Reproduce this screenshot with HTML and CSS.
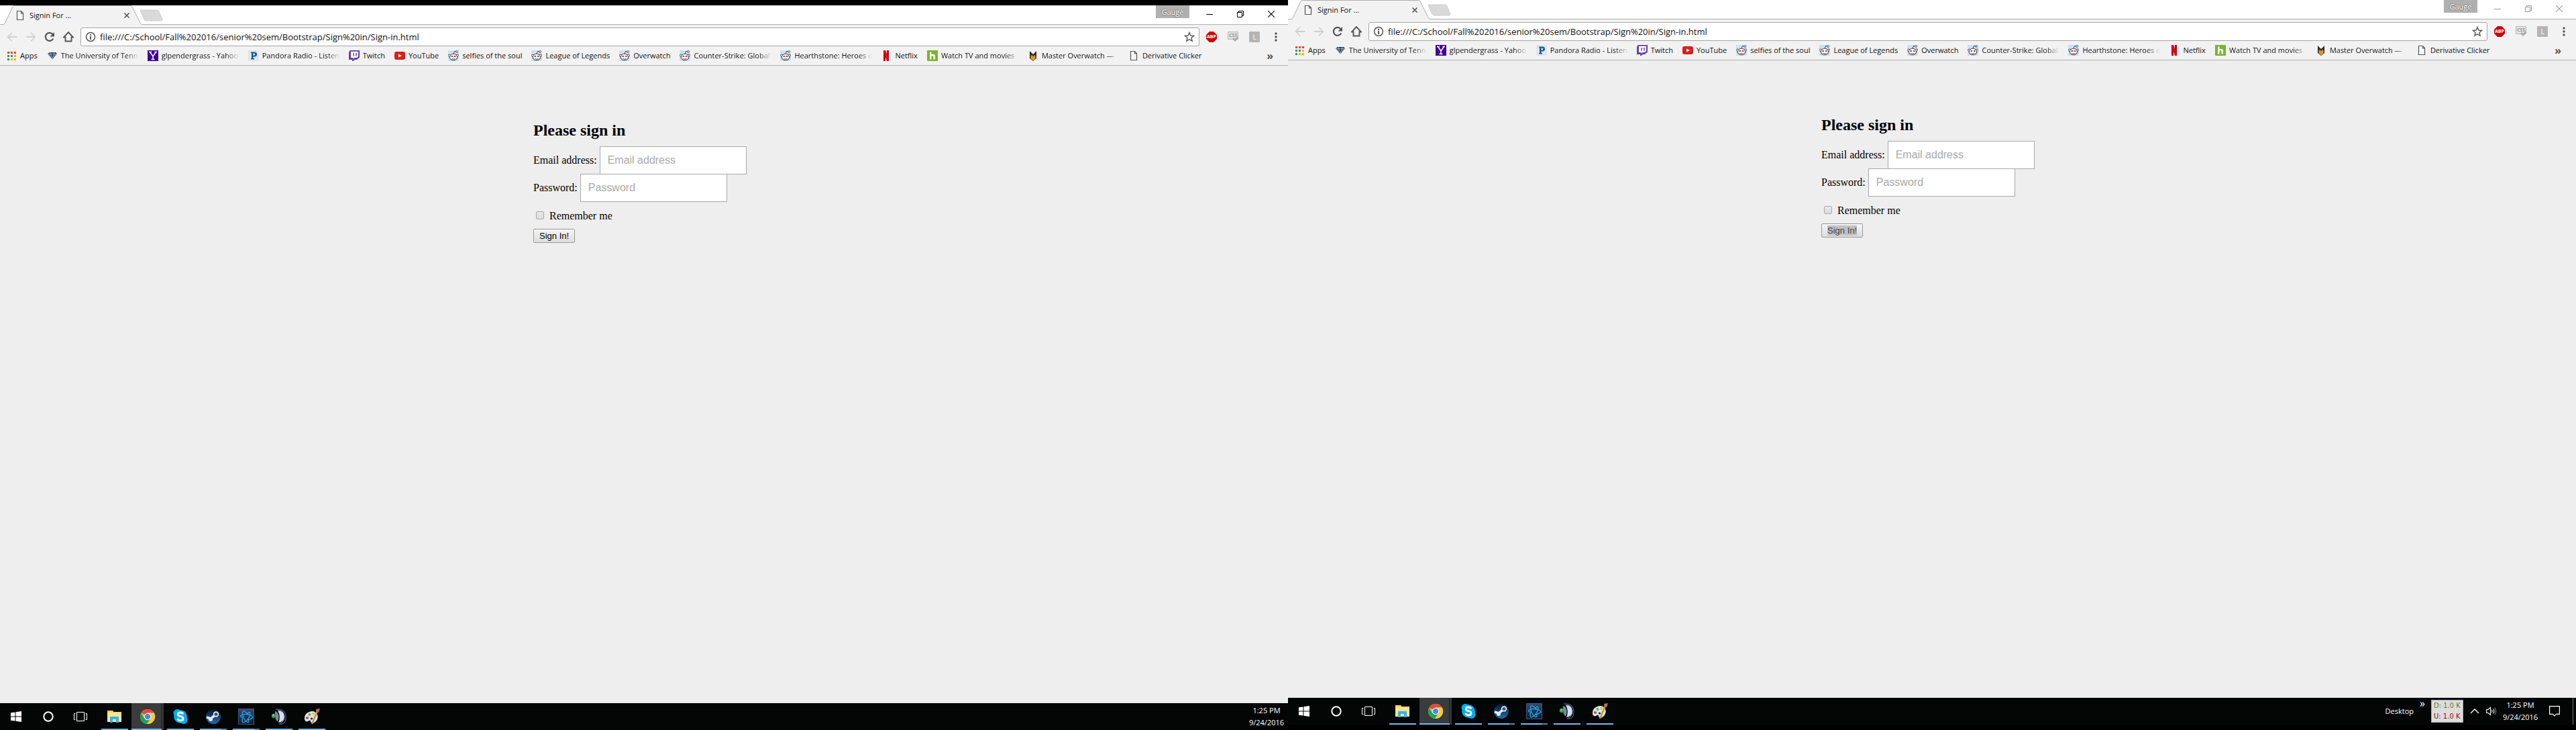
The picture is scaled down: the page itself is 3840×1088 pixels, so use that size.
FILE: index.html
```html
<!DOCTYPE html>
<html lang="en">
<head>
<meta charset="utf-8">
<title>Signin For ...</title>
<link rel="stylesheet" href="styles.css">
</head>
<body>
<svg class="sprite" aria-hidden="true">
  <defs>
    <linearGradient id="g-steam" x1="0" y1="0" x2="0" y2="1"><stop offset="0" stop-color="#0c1330"/><stop offset="1" stop-color="#1d6fb0"/></linearGradient>
    <linearGradient id="g-bnet" x1="0" y1="0" x2="0" y2="1"><stop offset="0" stop-color="#3a4a6e"/><stop offset="1" stop-color="#111a30"/></linearGradient>
  </defs>
  <symbol id="i-tab" viewBox="0 0 208 29"><path d="M0 28.5H1Q2.5 28.5 3.500 26L15 2Q16 .5 18 .5H190Q192 .5 193 2L205 26Q206 28.500 208 28.500V29H0z" fill="#f2f2f2"/><path d="M0 28.500H1Q2.500 28.500 3.500 26L15 2Q16 .5 18 .5H190Q192 .5 193 2L205 26Q206 28.500 208 28.500" fill="none" stroke="#b0b0b0"/></symbol>
  <symbol id="i-newtab" viewBox="0 0 36 18"><path d="M1 2Q1 1 2 1H26Q28 1 29 3L34 15Q34 17 32 17H10Q8 17 7 15z" fill="#d9d9d9" stroke="#cfcfcf"/></symbol>
  <symbol id="i-page" viewBox="0 0 16 16"><path d="M3.500 1.500H9.500L12.500 4.500V14.500H3.500zM9.500 1.500V5H12.500" fill="#f8f8f8" stroke="#555" stroke-width="1.200"/></symbol>
  <symbol id="i-close" viewBox="0 0 10 10"><path d="M1.500 1.500L8.500 8.500M8.500 1.500L1.500 8.500" stroke="#555" stroke-width="1.600"/></symbol>
  <symbol id="i-back" viewBox="0 0 16 16"><path d="M15 8H2M8 1.500L1.800 8L8 14.500" fill="none" stroke="#d0d0d0" stroke-width="1.800"/></symbol>
  <symbol id="i-forward" viewBox="0 0 16 16"><path d="M1 8H14M8 1.500L14.200 8L8 14.500" fill="none" stroke="#d0d0d0" stroke-width="1.800"/></symbol>
  <symbol id="i-reload" viewBox="0 0 16 16"><path d="M13.300 10.500A6 6 0 1 1 12.500 4" fill="none" stroke="#555" stroke-width="2.200"/><path d="M15 1V7.500H8.500z" fill="#555"/></symbol>
  <symbol id="i-home" viewBox="0 0 16 16"><path d="M8 1L1 8.500H3.500V14.500H12.500V8.500H15z" fill="none" stroke="#555" stroke-width="1.900"/></symbol>
  <symbol id="i-info" viewBox="0 0 16 16"><circle cx="8" cy="8" r="6.500" fill="none" stroke="#555" stroke-width="1.500"/><path d="M7 7H9V12H7zM7 4H9V6H7z" fill="#555"/></symbol>
  <symbol id="i-star" viewBox="0 0 16 16"><path d="M8 1.500L9.900 6L14.600 6.400L11 9.500L12.100 14.200L8 11.700L3.900 14.200L5 9.500L1.400 6.400L6.100 6z" fill="none" stroke="#555" stroke-width="1.400"/></symbol>
  <symbol id="i-stop" viewBox="0 0 16 16"><path d="M5 0H11L16 5V11L11 16H5L0 11V5z" fill="#c80000"/></symbol>
  <symbol id="i-css" viewBox="0 0 16 16"><path d="M.5 .5H15.500V11.500H.5z" fill="#e2e2e2" stroke="#b8b8b8"/><path d="M7 11L9 9L11 11L15 7L16 10L11 15z" fill="#aaa"/></symbol>
  <symbol id="i-dots" viewBox="0 0 16 16"><g fill="#555"><circle cx="8" cy="3" r="1.700"/><circle cx="8" cy="8" r="1.700"/><circle cx="8" cy="13" r="1.700"/></g></symbol>
  <symbol id="i-min" viewBox="0 0 10 10"><path d="M0 5.500H10" stroke="currentColor"/></symbol>
  <symbol id="i-restore" viewBox="0 0 10 10"><path d="M.5 2.500H7.500V9.500H.5zM2.500 2.500V.5H9.500V7.500H7.500" fill="none" stroke="currentColor"/></symbol>
  <symbol id="i-x" viewBox="0 0 10 10"><path d="M0 0L10 10M10 0L0 10" stroke="currentColor" stroke-width="1.100"/></symbol>
  <symbol id="i-apps" viewBox="0 0 16 16"><path d="M2 2H5V5H2zM7 2H10V5H7zM12 2H15V5H12z" fill="#ea4335"/><path d="M2 7H5V10H2zM2 12H5V15H2z" fill="#22a05a"/><path d="M7 7H10V10H7z" fill="#2a7de1"/><path d="M12 7H15V10H12zM7 12H10V15H7zM12 12H15V15H12z" fill="#f4b400"/></symbol>
  <symbol id="i-ut" viewBox="0 0 16 16"><path d="M1 5L4 3H13L15 5L8 13.500z" fill="#24425f"/><path d="M1 5.500H15M5 3L8 13L11 3M3.500 6L6 10M12.500 6L10 10" stroke="#a9bdd2" fill="none" stroke-width=".8"/></symbol>
  <symbol id="i-yahoo" viewBox="0 0 16 16"><path d="M0 0H16V16H0z" fill="#40009a"/><path d="M3.500 2.500L8 9L12.500 2.500M8 9V14M5.500 13.500H10.500M2 2.500H6M10.500 2.500H14" fill="none" stroke="#fff" stroke-width="1.500"/></symbol>
  <symbol id="i-pandora" viewBox="0 0 16 16"><rect width="16" height="16" rx="1" fill="#dfe6ec"/><path d="M4 2.500H9.500Q13 2.500 13 6T9.500 9.500H7.500V12H9V13.500H4V12H5V4H4zM7.500 4.500V7.800H8.800Q10.300 7.800 10.300 6.100T8.800 4.500z" fill="#145a8d" fill-rule="evenodd"/></symbol>
  <symbol id="i-twitch" viewBox="0 0 16 16"><path d="M1.500 0H16V10.500L12 14H9L6.500 16H5V14H0V3.500z" fill="#6441a5"/><path d="M3 1.800H14V9L12 11H8.500L6.300 13V11H3z" fill="#fff"/><path d="M6.500 4H8V8.500H6.500zM10.200 4H11.700V8.500H10.200z" fill="#6441a5"/></symbol>
  <symbol id="i-youtube" viewBox="0 0 16 16"><rect y="2" width="16" height="12" rx="3" fill="#d8201c"/><path d="M6 5.500L11 8L6 10.500z" fill="#fff"/></symbol>
  <symbol id="i-reddit" viewBox="0 0 16 16"><path d="M0 0H16V16H0z" fill="#c8e2fa"/><ellipse cx="8" cy="10" rx="5.800" ry="4.800" fill="#fff" stroke="#444" stroke-width="1.100"/><circle cx="1.900" cy="7.500" r="1.500" fill="#fff" stroke="#444" stroke-width=".9"/><circle cx="14.100" cy="7.500" r="1.500" fill="#fff" stroke="#444" stroke-width=".9"/><path d="M8 5L9.500 1.500L12.500 2M5.500 12.500Q8 14 10.500 12.500" fill="none" stroke="#444"/><circle cx="13" cy="2" r="1.400" fill="#fff" stroke="#444" stroke-width=".8"/><circle cx="5.800" cy="9" r="1.300" fill="#e0261a"/><circle cx="10.200" cy="9" r="1.300" fill="#e0261a"/></symbol>
  <symbol id="i-netflix" viewBox="0 0 16 16"><path d="M4 0H7V16H4zM9 0H12V16H9z" fill="#b1060f"/><path d="M4 0H7.200L12 16H8.800z" fill="#e50914"/></symbol>
  <symbol id="i-hulu" viewBox="0 0 16 16"><rect width="16" height="16" rx="1" fill="#76b52c"/><path d="M4 2.500H6.500V6Q12 5 12 9V13.500H9.500V9.500Q9.500 8 8 8T6.500 9.500V13.500H4z" fill="#fff"/></symbol>
  <symbol id="i-master" viewBox="0 0 16 16"><path d="M3 1L8 6L13 1V12L8 16L3 12z" fill="#2d2926"/><path d="M4.500 8L6.500 7L8 9.500L9.500 7L11.500 8V12.500L8 15.500L4.500 12.500z" fill="#e09a20"/></symbol>
  <symbol id="i-start" viewBox="0 0 16 16"><path d="M0 2.300L6.500 1.400V7.500H0zM7.500 1.200L16 0V7.500H7.500zM0 8.500H6.500V14.600L0 13.700zM7.500 8.500H16V16L7.500 14.800z" fill="#fff"/></symbol>
  <symbol id="i-ring" viewBox="0 0 16 16"><circle cx="8" cy="8" r="6.700" fill="none" stroke="#fff" stroke-width="2"/></symbol>
  <symbol id="i-taskview" viewBox="0 0 20 16"><path d="M4.500 1.500H15.500V14.500H4.500zM2.500 3.500H.5V12.500H2.500M17.500 3.500H19.500V12.500H17.500" fill="none" stroke="#fff"/></symbol>
  <symbol id="i-folder" viewBox="0 0 24 24"><path d="M1 3H9L10.500 5H22V20H1z" fill="#f5cf62"/><path d="M1 6H22V20H1z" fill="#fde391"/><path d="M5 12H18V21H14V16H9V21H5z" fill="#36b3e8"/></symbol>
  <symbol id="i-chrome" viewBox="0 0 24 24"><circle cx="12" cy="12" r="11" fill="#f9c93c"/><path d="M12 12L2.500 6.500A11 11 0 0 1 21.500 6.500H12z" fill="#dd4b3e"/><path d="M12 12L7.200 14.800L2.500 6.500A11 11 0 0 0 11 23L16.700 14.800z" fill="#1da462"/><path d="M12 6.500H21.600A11 11 0 0 1 11 23L16.800 14.800z" fill="#f9c93c"/><circle cx="12" cy="12" r="5.200" fill="#fff"/><circle cx="12" cy="12" r="4.200" fill="#4b87f0"/></symbol>
  <symbol id="i-skype" viewBox="0 0 24 24"><circle cx="12" cy="12" r="9.800" fill="#00aff0"/><circle cx="7.500" cy="7" r="6" fill="#00aff0"/><circle cx="16.500" cy="17" r="6" fill="#00aff0"/><path d="M16 8.500Q15 6 12 6Q8.300 6 8.300 8.800Q8.300 11 12 11.700Q16 12.500 16 15Q16 18 12 18Q8.500 18 7.800 15" fill="none" stroke="#fff" stroke-width="2.800"/></symbol>
  <symbol id="i-steam" viewBox="0 0 24 24"><circle cx="12" cy="12" r="11" fill="url(#g-steam)"/><path d="M2 13L8 15L12 12L15 9" fill="none" stroke="#e6edf5" stroke-width="3.500"/><circle cx="8" cy="16" r="3" fill="#e6edf5"/><circle cx="16" cy="8.500" r="4.200" fill="#e6edf5"/><circle cx="16" cy="8.500" r="2.500" fill="#24406e" stroke="#aab" stroke-width=".8"/></symbol>
  <symbol id="i-bnet" viewBox="0 0 24 24"><path d="M.5 .5H23.500V23.500H.5z" fill="url(#g-bnet)" stroke="#44557a"/><g fill="none" stroke="#1da8ee" stroke-width="1.300"><path id="bnet-arm" d="M9 4Q6 3 6.500 8Q8 17 14 20.500Q17 21 15.500 17M9 4Q12 5 15 9"/><path d="M9 4Q6 3 6.500 8Q8 17 14 20.500Q17 21 15.500 17M9 4Q12 5 15 9" transform="rotate(120 12 12.500)"/><path d="M9 4Q6 3 6.500 8Q8 17 14 20.500Q17 21 15.500 17M9 4Q12 5 15 9" transform="rotate(240 12 12.500)"/></g></symbol>
  <symbol id="i-ts" viewBox="0 0 24 24"><path d="M9 2A10.500 10.500 0 1 1 11 23Q19 20 18 12T9 2z" fill="#8290a8"/><path d="M10 3Q20 4 19.500 12T11 21Q15 12 10 3z" fill="#d3deee"/><path d="M6 4Q12 6 11.500 13T9 19Q5 15 6 4z" fill="#7b879c"/><path d="M7 1Q21 0 22 12T12 23.500" fill="none" stroke="#3c4c6c" stroke-width="1.500"/><circle cx="4" cy="11" r="3.200" fill="#2f9d45"/><circle cx="3.500" cy="10" r="1.200" fill="#9be09f"/></symbol>
  <symbol id="i-paint" viewBox="0 0 24 24"><path d="M1 16Q0 8 8 5Q16 2 20 9Q22 14 18 19Q13 24 10 20Q11 16 6 19Q2 20 1 16z" fill="#d3e8f2"/><circle cx="5" cy="14" r="2.100" fill="#d8412f"/><circle cx="8.500" cy="9" r="2" fill="#71ae3b"/><circle cx="14" cy="7.500" r="2" fill="#f0bc2f"/><circle cx="11.500" cy="15" r="1.600" fill="#16242c"/><path d="M20 4L12 23" stroke="#e48926" stroke-width="2.400"/><path d="M18 1L24 0L22 6L18.500 6z" fill="#a8764c"/></symbol>
  <symbol id="i-up" viewBox="0 0 16 16"><path d="M2 11L8 5L14 11" fill="none" stroke="#fff" stroke-width="1.400"/></symbol>
  <symbol id="i-sound" viewBox="0 0 16 16"><path d="M.7 5.500H3L6.500 2.500V13.500L3 10.500H.7z" fill="none" stroke="#fff" stroke-width="1.100"/><path d="M8.500 6Q9.800 8 8.500 10M10.700 4.500Q13 8 10.700 11.500" fill="none" stroke="#fff" stroke-width="1.100"/><path d="M12.800 2.500Q16.500 8 12.800 13.500" fill="none" stroke="#777" stroke-width="1.100"/></symbol>
  <symbol id="i-note" viewBox="0 0 16 16"><path d="M.6 .6H15.400V12.400H10.500L8 15L5.500 12.400H.6z" fill="none" stroke="#fff" stroke-width="1.200"/></symbol>
</svg>

<div class="desktop">
  <section class="monitor monitor-low">
    <div class="window">
      <header class="tabstrip">
        <div class="tab">
          <svg class="tab-shape"><use href="#i-tab"/></svg>
          <svg class="icon"><use href="#i-page"/></svg>
          <span class="tab-title">Signin For ...</span>
          <button class="bare" aria-label="Close tab"><svg class="icon-s"><use href="#i-close"/></svg></button>
        </div>
        <button class="bare newtab" aria-label="New tab"><svg><use href="#i-newtab"/></svg></button>
        <button class="profile">Gauge</button>
        <div class="controls">
          <button class="bare" aria-label="Minimize"><svg class="icon-s"><use href="#i-min"/></svg></button>
          <button class="bare" aria-label="Restore"><svg class="icon-s"><use href="#i-restore"/></svg></button>
          <button class="bare" aria-label="Close"><svg class="icon-s"><use href="#i-x"/></svg></button>
        </div>
      </header>
      <div class="toolbar">
        <div class="nav">
          <button class="bare" aria-label="Back"><svg class="icon"><use href="#i-back"/></svg></button>
          <button class="bare" aria-label="Forward"><svg class="icon"><use href="#i-forward"/></svg></button>
          <button class="bare" aria-label="Reload"><svg class="icon"><use href="#i-reload"/></svg></button>
          <button class="bare" aria-label="Home"><svg class="icon"><use href="#i-home"/></svg></button>
        </div>
        <div class="omnibox">
          <svg class="icon"><use href="#i-info"/></svg>
          <input class="url" type="text" aria-label="Address" value="file:///C:/School/Fall%202016/senior%20sem/Bootstrap/Sign%20in/Sign-in.html">
          <button class="bare" aria-label="Bookmark"><svg class="icon"><use href="#i-star"/></svg></button>
        </div>
        <div class="extensions">
          <button class="bare ext ext-abp"><svg class="icon"><use href="#i-stop"/></svg><span>ABP</span></button>
          <button class="bare ext ext-css"><svg class="icon"><use href="#i-css"/></svg><span>CSS</span></button>
          <button class="bare ext ext-l">L</button>
          <button class="bare" aria-label="Menu"><svg class="icon"><use href="#i-dots"/></svg></button>
        </div>
      </div>
      <nav class="bookmarks">
        <a href="#"><svg class="icon"><use href="#i-apps"/></svg><span>Apps</span></a>
        <a href="#"><svg class="icon"><use href="#i-ut"/></svg><span class="fade">The University of Tenn</span></a>
        <a href="#"><svg class="icon"><use href="#i-yahoo"/></svg><span class="fade">glpendergrass - Yahoo</span></a>
        <a href="#"><svg class="icon"><use href="#i-pandora"/></svg><span class="fade">Pandora Radio - Listen</span></a>
        <a href="#"><svg class="icon"><use href="#i-twitch"/></svg><span>Twitch</span></a>
        <a href="#"><svg class="icon"><use href="#i-youtube"/></svg><span>YouTube</span></a>
        <a href="#"><svg class="icon"><use href="#i-reddit"/></svg><span>selfies of the soul</span></a>
        <a href="#"><svg class="icon"><use href="#i-reddit"/></svg><span>League of Legends</span></a>
        <a href="#"><svg class="icon"><use href="#i-reddit"/></svg><span>Overwatch</span></a>
        <a href="#"><svg class="icon"><use href="#i-reddit"/></svg><span class="fade">Counter-Strike: Global</span></a>
        <a href="#"><svg class="icon"><use href="#i-reddit"/></svg><span class="fade">Hearthstone: Heroes o</span></a>
        <a href="#"><svg class="icon"><use href="#i-netflix"/></svg><span>Netflix</span></a>
        <a href="#"><svg class="icon"><use href="#i-hulu"/></svg><span class="fade">Watch TV and movies</span></a>
        <a href="#"><svg class="icon"><use href="#i-master"/></svg><span class="fade">Master Overwatch —</span></a>
        <a href="#"><svg class="icon"><use href="#i-page"/></svg><span>Derivative Clicker</span></a>
        <button class="bare more" aria-label="More bookmarks">»</button>
      </nav>
      <main class="page">
        <form class="signin">
          <h2>Please sign in</h2>
          <div class="field"><label for="email-a">Email address:</label><input id="email-a" type="email" placeholder="Email address"></div>
          <div class="field"><label for="pass-a">Password:</label><input id="pass-a" type="password" placeholder="Password"></div>
          <label class="remember"><input type="checkbox"> Remember me</label>
          <button class="submit" type="button"><span>Sign In!</span></button>
        </form>
      </main>
    </div>
    <footer class="taskbar">
      <button class="bare task" aria-label="Start"><svg class="icon"><use href="#i-start"/></svg></button>
      <button class="bare task" aria-label="Search"><svg class="icon"><use href="#i-ring"/></svg></button>
      <button class="bare task" aria-label="Task view"><svg class="icon-w"><use href="#i-taskview"/></svg></button>
      <div class="running">
        <button class="bare task app" aria-label="File Explorer"><svg class="icon-l"><use href="#i-folder"/></svg></button>
        <button class="bare task app active" aria-label="Chrome"><svg class="icon-l"><use href="#i-chrome"/></svg></button>
        <button class="bare task app" aria-label="Skype"><svg class="icon-l"><use href="#i-skype"/></svg></button>
        <button class="bare task app multi" aria-label="Steam"><svg class="icon-l"><use href="#i-steam"/></svg></button>
        <button class="bare task app multi" aria-label="Battle.net"><svg class="icon-l"><use href="#i-bnet"/></svg></button>
        <button class="bare task app" aria-label="TeamSpeak"><svg class="icon-l"><use href="#i-ts"/></svg></button>
        <button class="bare task app" aria-label="Paint"><svg class="icon-l"><use href="#i-paint"/></svg></button>
      </div>
      <div class="tray"><div class="clock"><time>1:25 PM</time><time>9/24/2016</time></div></div>
    </footer>
  </section>

  <section class="monitor monitor-high">
    <div class="window inactive">
      <header class="tabstrip">
        <div class="tab">
          <svg class="tab-shape"><use href="#i-tab"/></svg>
          <svg class="icon"><use href="#i-page"/></svg>
          <span class="tab-title">Signin For ...</span>
          <button class="bare" aria-label="Close tab"><svg class="icon-s"><use href="#i-close"/></svg></button>
        </div>
        <button class="bare newtab" aria-label="New tab"><svg><use href="#i-newtab"/></svg></button>
        <button class="profile">Gauge</button>
        <div class="controls">
          <button class="bare" aria-label="Minimize"><svg class="icon-s"><use href="#i-min"/></svg></button>
          <button class="bare" aria-label="Restore"><svg class="icon-s"><use href="#i-restore"/></svg></button>
          <button class="bare" aria-label="Close"><svg class="icon-s"><use href="#i-x"/></svg></button>
        </div>
      </header>
      <div class="toolbar">
        <div class="nav">
          <button class="bare" aria-label="Back"><svg class="icon"><use href="#i-back"/></svg></button>
          <button class="bare" aria-label="Forward"><svg class="icon"><use href="#i-forward"/></svg></button>
          <button class="bare" aria-label="Reload"><svg class="icon"><use href="#i-reload"/></svg></button>
          <button class="bare" aria-label="Home"><svg class="icon"><use href="#i-home"/></svg></button>
        </div>
        <div class="omnibox">
          <svg class="icon"><use href="#i-info"/></svg>
          <input class="url" type="text" aria-label="Address" value="file:///C:/School/Fall%202016/senior%20sem/Bootstrap/Sign%20in/Sign-in.html">
          <button class="bare" aria-label="Bookmark"><svg class="icon"><use href="#i-star"/></svg></button>
        </div>
        <div class="extensions">
          <button class="bare ext ext-abp"><svg class="icon"><use href="#i-stop"/></svg><span>ABP</span></button>
          <button class="bare ext ext-css"><svg class="icon"><use href="#i-css"/></svg><span>CSS</span></button>
          <button class="bare ext ext-l">L</button>
          <button class="bare" aria-label="Menu"><svg class="icon"><use href="#i-dots"/></svg></button>
        </div>
      </div>
      <nav class="bookmarks">
        <a href="#"><svg class="icon"><use href="#i-apps"/></svg><span>Apps</span></a>
        <a href="#"><svg class="icon"><use href="#i-ut"/></svg><span class="fade">The University of Tenn</span></a>
        <a href="#"><svg class="icon"><use href="#i-yahoo"/></svg><span class="fade">glpendergrass - Yahoo</span></a>
        <a href="#"><svg class="icon"><use href="#i-pandora"/></svg><span class="fade">Pandora Radio - Listen</span></a>
        <a href="#"><svg class="icon"><use href="#i-twitch"/></svg><span>Twitch</span></a>
        <a href="#"><svg class="icon"><use href="#i-youtube"/></svg><span>YouTube</span></a>
        <a href="#"><svg class="icon"><use href="#i-reddit"/></svg><span>selfies of the soul</span></a>
        <a href="#"><svg class="icon"><use href="#i-reddit"/></svg><span>League of Legends</span></a>
        <a href="#"><svg class="icon"><use href="#i-reddit"/></svg><span>Overwatch</span></a>
        <a href="#"><svg class="icon"><use href="#i-reddit"/></svg><span class="fade">Counter-Strike: Global</span></a>
        <a href="#"><svg class="icon"><use href="#i-reddit"/></svg><span class="fade">Hearthstone: Heroes o</span></a>
        <a href="#"><svg class="icon"><use href="#i-netflix"/></svg><span>Netflix</span></a>
        <a href="#"><svg class="icon"><use href="#i-hulu"/></svg><span class="fade">Watch TV and movies</span></a>
        <a href="#"><svg class="icon"><use href="#i-master"/></svg><span class="fade">Master Overwatch —</span></a>
        <a href="#"><svg class="icon"><use href="#i-page"/></svg><span>Derivative Clicker</span></a>
        <button class="bare more" aria-label="More bookmarks">»</button>
      </nav>
      <main class="page">
        <form class="signin">
          <h2>Please sign in</h2>
          <div class="field"><label for="email-b">Email address:</label><input id="email-b" type="email" placeholder="Email address"></div>
          <div class="field"><label for="pass-b">Password:</label><input id="pass-b" type="password" placeholder="Password"></div>
          <label class="remember"><input type="checkbox"> Remember me</label>
          <button class="submit selected" type="button"><span>Sign In!</span></button>
        </form>
      </main>
    </div>
    <footer class="taskbar">
      <button class="bare task" aria-label="Start"><svg class="icon"><use href="#i-start"/></svg></button>
      <button class="bare task" aria-label="Search"><svg class="icon"><use href="#i-ring"/></svg></button>
      <button class="bare task" aria-label="Task view"><svg class="icon-w"><use href="#i-taskview"/></svg></button>
      <div class="running">
        <button class="bare task app" aria-label="File Explorer"><svg class="icon-l"><use href="#i-folder"/></svg></button>
        <button class="bare task app active" aria-label="Chrome"><svg class="icon-l"><use href="#i-chrome"/></svg></button>
        <button class="bare task app" aria-label="Skype"><svg class="icon-l"><use href="#i-skype"/></svg></button>
        <button class="bare task app multi" aria-label="Steam"><svg class="icon-l"><use href="#i-steam"/></svg></button>
        <button class="bare task app multi" aria-label="Battle.net"><svg class="icon-l"><use href="#i-bnet"/></svg></button>
        <button class="bare task app" aria-label="TeamSpeak"><svg class="icon-l"><use href="#i-ts"/></svg></button>
        <button class="bare task app" aria-label="Paint"><svg class="icon-l"><use href="#i-paint"/></svg></button>
      </div>
      <div class="tray tray-full">
        <span class="tray-label">Desktop</span>
        <button class="bare tray-more" aria-label="More toolbars">»</button>
        <div class="meter"><span class="down">D: 1.0 K</span><span class="up">U: 1.0 K</span></div>
        <button class="bare" aria-label="Hidden icons"><svg class="icon"><use href="#i-up"/></svg></button>
        <button class="bare" aria-label="Volume"><svg class="icon"><use href="#i-sound"/></svg></button>
        <div class="clock"><time>1:25 PM</time><time>9/24/2016</time></div>
        <button class="bare notes" aria-label="Notifications"><svg class="icon"><use href="#i-note"/></svg></button>
      </div>
    </footer>
  </section>
</div>
</body>
</html>
```

FILE: styles.css
```css
* { box-sizing: border-box; }
body { margin: 0; background: #000; font: 11px/16px "Open Sans", "Noto Sans", sans-serif; color: #111; }
.sprite { position: absolute; width: 0; height: 0; }
svg { display: block; flex: none; }
.icon { width: 16px; height: 16px; }
.icon-s { width: 10px; height: 10px; }
.icon-w { width: 20px; height: 16px; }
.icon-l { width: 24px; height: 24px; }
.bare { border: 0; padding: 0; background: none; color: inherit; font: inherit; display: flex; align-items: center; justify-content: center; flex: none; }

.desktop { display: grid; grid-template-columns: 1fr 1fr; min-height: 100vh; }
.monitor { display: flex; flex-direction: column; min-width: 0; }
.monitor-low { padding-top: 8px; }
.monitor-high { padding-bottom: 8px; }
.window { flex: 1; display: flex; flex-direction: column; background: #f2f2f2; min-width: 0; }

/* tab strip */
.tabstrip { display: flex; align-items: flex-start; height: 29px; background: #fff; border-bottom: 1px solid #b0b0b0; padding-right: 20px; }
.tab { position: relative; display: flex; align-items: center; width: 208px; height: 29px; margin-left: 4px; padding: 0 14px 0 18px; gap: 6px; }
.tab-shape { position: absolute; inset: 0; width: 208px; height: 29px; }
.tab > .icon, .tab-title, .tab > .bare { position: relative; }
.tab-title { flex: 1; }
.tab > .bare { margin-right: 4px; }
.newtab { margin: 6px auto 0 -4px; }
.newtab svg { width: 36px; height: 18px; }
.profile { width: 50px; height: 19px; border: 0; padding: 0; background: #b0b0b0; color: #fff; font: inherit; text-shadow: 0 0 2px #333; }
.controls { display: flex; gap: 36px; padding: 8px 0 0 25px; color: #000; }
.inactive .controls { color: #999; }

/* toolbar */
.toolbar { display: flex; align-items: center; height: 36px; padding: 0 10px; }
.nav { display: flex; gap: 12px; width: 110px; }
.omnibox { flex: 1; display: flex; align-items: center; gap: 6px; height: 28px; padding: 0 6px; background: #fff; border: 1px solid #a6a6a6; border-radius: 3px; }
.url { flex: 1; border: 0; padding: 0; outline: 0; background: none; font: 13px/20px "Open Sans", "Noto Sans", sans-serif; color: #111; }
.extensions { display: flex; gap: 16px; padding-left: 10px; }
.ext { position: relative; width: 16px; height: 16px; color: #fff; font-size: 7px; line-height: 16px; font-weight: 700; }
.ext span { position: absolute; inset: 0; text-align: center; }
.ext-css span { color: #999; line-height: 12px; }
.ext-l { background: #b4b4b4; border-radius: 1px; font-size: 10px; font-weight: 400; }

/* bookmarks */
.bookmarks { display: flex; align-items: center; gap: 13px; height: 25px; padding: 0 22px 4px 9px; border-bottom: 1px solid #b0b0b0; }
.bookmarks a { display: flex; align-items: center; gap: 5px; color: #111; text-decoration: none; white-space: nowrap; }
.bookmarks span { padding-right: 1px; }
.bookmarks .fade { width: 116px; padding-right: 0; overflow: hidden; -webkit-mask-image: linear-gradient(to right, #000 96px, transparent); mask-image: linear-gradient(to right, #000 96px, transparent); }
.more { margin-left: auto; font-size: 16px; font-weight: 700; color: #555; }

/* sign-in page */
.page { flex: 1; background: #eee; color: #000; font: 16px/18px "Liberation Serif", "Times New Roman", serif; }
.signin { width: 330px; margin: 0 auto; padding-top: 83px; display: flex; flex-direction: column; align-items: flex-start; }
.signin h2 { margin: 0 0 10px; font-size: 24px; line-height: 27px; }
.field { display: flex; align-items: center; gap: 4px; margin-bottom: -1px; white-space: nowrap; }
.field input { width: 219px; height: 42px; padding: 10px 11px; border: 1px solid #a9a9a9; border-radius: 0; background: #fff; font: 16px/20px "Liberation Sans", Arial, sans-serif; }
.field input::placeholder { color: #a9a9a9; }
.remember { display: flex; align-items: center; gap: 8px; margin: 13px 0 10px 4px; }
.remember input { appearance: none; width: 12px; height: 12px; margin: 0 0 2px; border: 1px solid #aaa; border-radius: 2px; background: linear-gradient(#e8e8e8, #dcdcdc); }
.submit { height: 21px; padding: 0 8px; border: 1px solid #999; border-radius: 2px; background: linear-gradient(#f6f6f6, #ddd); color: #000; font: 13px/15px "Liberation Sans", Arial, sans-serif; }
.selected span { display: block; background: #c0c0c0; color: #444; }

/* taskbar */
.taskbar { display: flex; height: 40px; background: #040606; color: #fff; }
.task { width: 48px; height: 40px; }
.running { display: flex; gap: 1px; margin-left: 3px; }
.app { background: linear-gradient(#76b9ed, #76b9ed) 4px 38px / 40px 2px no-repeat; }
.app.active { background: linear-gradient(#76b9ed, #76b9ed) 0 38px / 45px 2px no-repeat, linear-gradient(90deg, #393b3c 44px, #1f2121 44px, #1f2121 45px, #333535 45px); }
.app.multi { background: linear-gradient(90deg, #76b9ed 32px, #5585ab 32px) 4px 38px / 40px 2px no-repeat; }
.tray { margin-left: auto; display: flex; align-items: center; padding-right: 6px; }
.clock { display: flex; flex-direction: column; align-items: center; line-height: 18px; width: 52px; white-space: nowrap; }
.tray-full { padding: 0 4px 0 0; gap: 9px; }
.tray-full .notes { width: 44px; height: 40px; padding-right: 12px; border-right: 1px solid #777; }
.tray-more { align-self: flex-start; font-size: 16px; }
.meter { display: flex; flex-direction: column; width: 48px; height: 34px; padding: 0 3px; background: #dcdcdc; border: 1px solid #aaa; font: 10px/16px "DejaVu Sans", sans-serif; white-space: nowrap; }
.down { color: #6b7a2b; }
.up { color: #901010; }
```
